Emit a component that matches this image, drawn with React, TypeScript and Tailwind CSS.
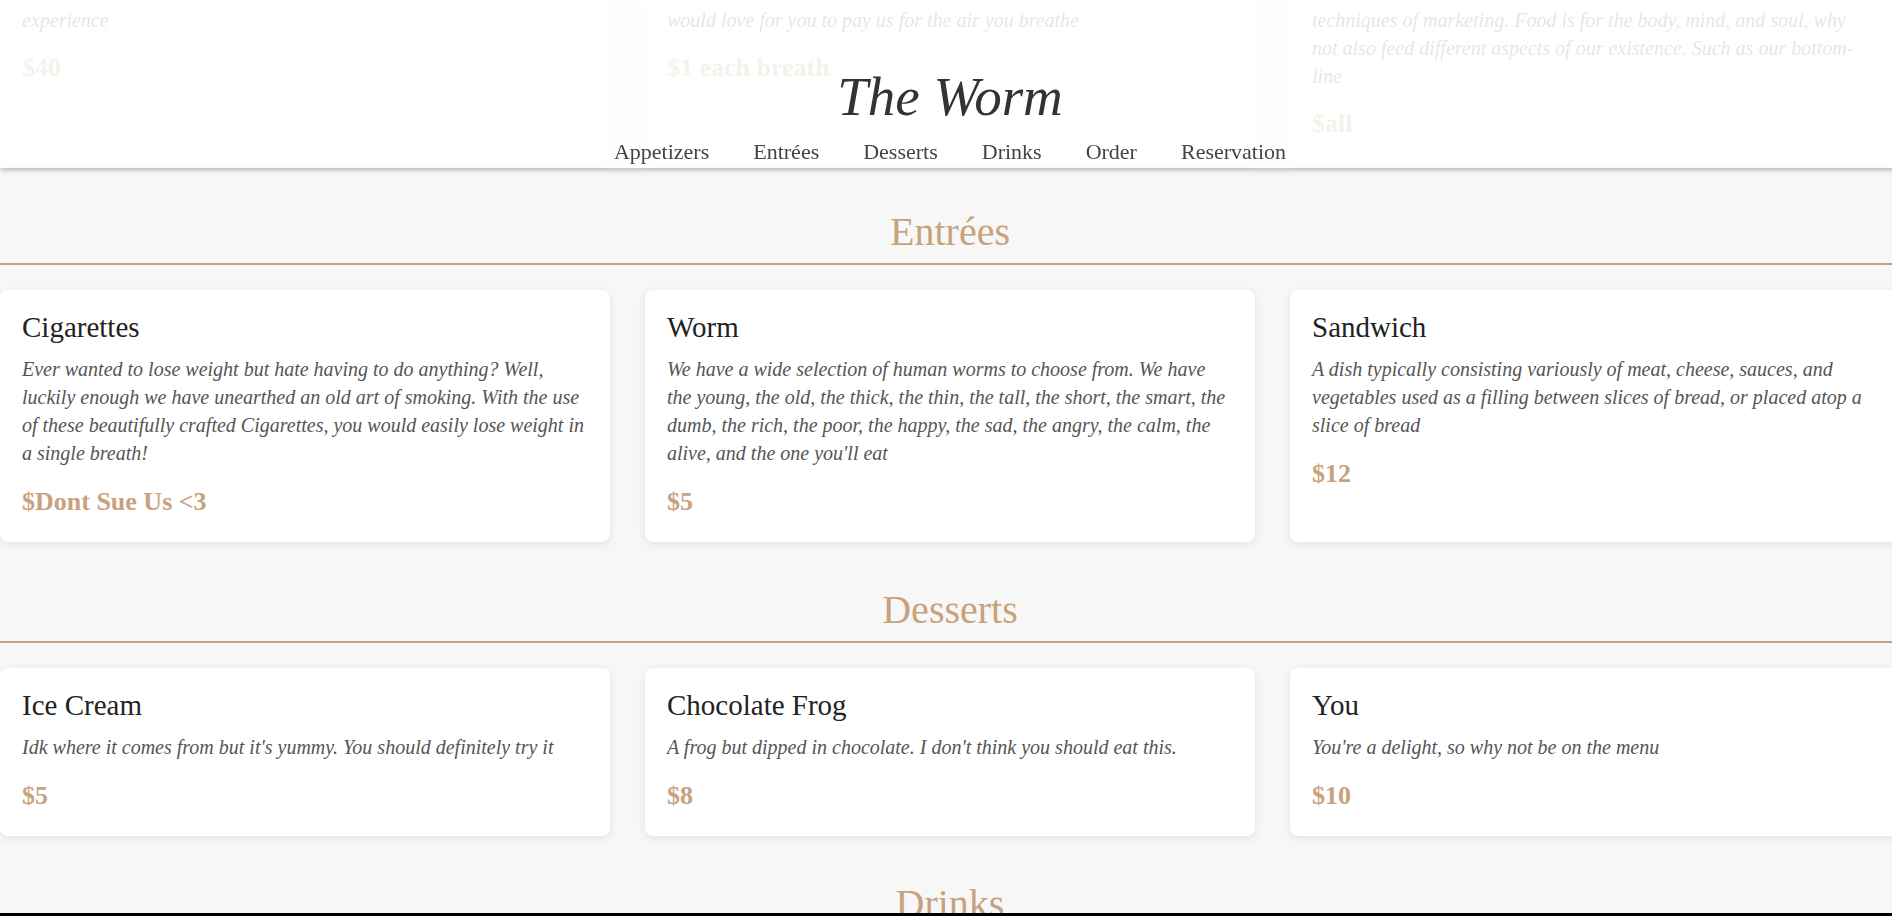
import React from "react";

interface Dish {
	name: string;
	description: string;
	price: string;
}

const entrees: Dish[] = [
	{
		name: "Cigarettes",
		description:
			"Ever wanted to lose weight but hate having to do anything? Well, luckily enough we have unearthed an old art of smoking. With the use of these beautifully crafted Cigarettes, you would easily lose weight in a single breath!",
		price: "$Dont Sue Us <3",
	},
	{
		name: "Worm",
		description:
			"We have a wide selection of human worms to choose from. We have the young, the old, the thick, the thin, the tall, the short, the smart, the dumb, the rich, the poor, the happy, the sad, the angry, the calm, the alive, and the one you'll eat",
		price: "$5",
	},
	{
		name: "Sandwich",
		description:
			"A dish typically consisting variously of meat, cheese, sauces, and vegetables used as a filling between slices of bread, or placed atop a slice of bread",
		price: "$12",
	},
];

const desserts: Dish[] = [
	{
		name: "Ice Cream",
		description: "Idk where it comes from but it's yummy. You should definitely try it",
		price: "$5",
	},
	{
		name: "Chocolate Frog",
		description: "A frog but dipped in chocolate. I don't think you should eat this.",
		price: "$8",
	},
	{
		name: "You",
		description: "You're a delight, so why not be on the menu",
		price: "$10",
	},
];

// appetizers are scrolled mostly out of view, only their last lines show
const appetizerTails = [
	{ lines: ["experience"], price: "$40" },
	{ lines: ["would love for you to pay us for the air you breathe"], price: "$1 each breath" },
	{
		lines: [
			"techniques of marketing. Food is for the body, mind, and soul, why",
			"not also feed different aspects of our existence. Such as our bottom-",
			"line",
		],
		price: "$all",
	},
];

const navLinks = ["Appetizers", "Entrées", "Desserts", "Drinks", "Order", "Reservation"];

function DishCard({ dish }: { dish: Dish }) {
	return (
		<div className="bg-white rounded-lg shadow-[0_2px_8px_rgba(0,0,0,0.09)] px-[22px] pt-5 pb-[25px]">
			<h3 className="text-[29px] leading-[34px] text-[#222]">{dish.name}</h3>
			<p className="mt-[11px] text-[20px] leading-[28px] italic text-[#555]">{dish.description}</p>
			<p className="mt-5 text-[26px] leading-[30px] font-bold text-[#c8a27c]">{dish.price}</p>
		</div>
	);
}

function Section({ title, dishes }: { title: string; dishes?: Dish[] }) {
	return (
		<section className="mt-[44px]">
			<h2 className="text-center text-[40px] leading-[48px] text-[#c8a27c] border-b-2 border-[#c8a27c] pb-[7px]">
				{title}
			</h2>

			{dishes && (
				<div className="mt-[25px] grid grid-cols-[610px_610px_610px] gap-[35px]">
					{dishes.map((dish) => (
						<DishCard key={dish.name} dish={dish} />
					))}
				</div>
			)}
		</section>
	);
}

export default function App() {
	return (
		<div
			className="h-screen overflow-hidden bg-[#f7f7f7]"
			style={{ fontFamily: '"Liberation Serif", "Times New Roman", serif' }}
		>
			{/* HEADER */}

			<header className="fixed top-0 left-0 z-10 w-[1900px] h-[168px] bg-white/85 shadow-[0_2px_5px_rgba(0,0,0,0.25)] flex flex-col items-center pt-[66px]">
				<h1 className="text-[55px] leading-[62px] italic text-[#333]">The Worm</h1>

				<nav className="mt-[9px] flex gap-[44px]">
					{navLinks.map((link) => (
						<a key={link} className="text-[22px] leading-[30px] text-[#444]">
							{link}
						</a>
					))}
				</nav>
			</header>

			<main className="w-[1900px]">
				{/* APPETIZERS (scrolled under header) */}

				<div className="grid grid-cols-[610px_610px_610px] gap-[35px]">
					{appetizerTails.map((card, idx) => (
						<div
							key={idx}
							className="bg-white rounded-b-lg shadow-[0_2px_8px_rgba(0,0,0,0.09)] px-[22px] pt-[6px] pb-[25px]"
						>
							<p className="text-[20px] leading-[28px] italic text-[#555]">
								{card.lines.map((line) => (
									<span key={line} className="block whitespace-nowrap">
										{line}
									</span>
								))}
							</p>
							<p className="mt-[19px] text-[26px] leading-[30px] font-bold text-[#c8a27c]">{card.price}</p>
						</div>
					))}
				</div>

				<Section title="Entrées" dishes={entrees} />
				<Section title="Desserts" dishes={desserts} />
				<Section title="Drinks" />
			</main>

			<div className="fixed bottom-0 inset-x-0 h-[3px] bg-black" />
		</div>
	);
}
